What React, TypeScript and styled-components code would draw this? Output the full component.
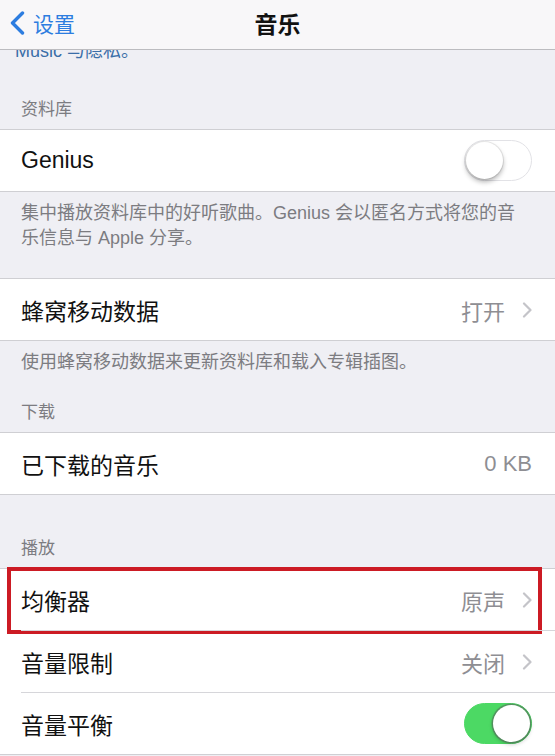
import * as React from "react";
import styled, { createGlobalStyle } from "styled-components";

const GlobalStyle = createGlobalStyle`
  html, body {
    margin: 0;
    padding: 0;
    background: #efeff4;
  }
  body {
    font-family: "Liberation Sans", "Noto Sans CJK SC", sans-serif;
    -webkit-font-smoothing: antialiased;
  }
`;

interface RowProps {
  label: string;
  value?: string;
  chevron?: boolean;
  toggle?: "on" | "off";
  highlighted?: boolean;
}

const Chevron = () => (
  <svg width="10" height="16" viewBox="0 0 10 16">
    <path
      d="M2 1.5 L8.5 8 L2 14.5"
      fill="none"
      stroke="#c4c4c9"
      strokeWidth="2.2"
      strokeLinecap="round"
      strokeLinejoin="round"
    />
  </svg>
);

const BackArrow = () => (
  <svg width="16" height="24" viewBox="0 0 16 24">
    <path
      d="M13.5 2 L3.5 12 L13.5 22"
      fill="none"
      stroke="#2d7de0"
      strokeWidth="3.4"
      strokeLinecap="round"
      strokeLinejoin="round"
    />
  </svg>
);

const Row = ({ label, value, chevron, toggle, highlighted }: RowProps) => (
  <StyledRow $highlighted={highlighted}>
    <Label>{label}</Label>
    <Accessory>
      {value && <Value>{value}</Value>}
      {chevron && <Chevron />}
      {toggle && (
        <Switch $on={toggle === "on"}>
          <Knob $on={toggle === "on"} />
        </Switch>
      )}
    </Accessory>
  </StyledRow>
);

export default function App() {
  return (
    <>
      <GlobalStyle />
      <Screen>
        <NavBar>
          <BackButton>
            <BackArrow />
            <span>设置</span>
          </BackButton>
          <Title>音乐</Title>
          <span />
        </NavBar>

        <ScrolledNote>
          <span>Music 与隐私。</span>
        </ScrolledNote>

        <Header $top={37}>资料库</Header>
        <Group>
          <Row label="Genius" toggle="off" />
        </Group>
        <Footer $bottom={27}>
          集中播放资料库中的好听歌曲。Genius 会以匿名方式将您的音
          <br />
          乐信息与 Apple 分享。
        </Footer>

        <Group>
          <Row label="蜂窝移动数据" value="打开" chevron />
        </Group>
        <Footer $bottom={0}>使用蜂窝移动数据来更新资料库和载入专辑插图。</Footer>

        <Header $top={27}>下载</Header>
        <Group>
          <Row label="已下载的音乐" value="0 KB" />
        </Group>

        <Header $top={43}>播放</Header>
        <Group>
          <Row label="均衡器" value="原声" chevron highlighted />
          <Row label="音量限制" value="关闭" chevron />
          <Row label="音量平衡" toggle="on" />
        </Group>
      </Screen>
    </>
  );
}

const Screen = styled.div`
  width: 555px;
  height: 756px;
  overflow: hidden;
  background: #efeff4;
  display: flex;
  flex-direction: column;
`;

const NavBar = styled.header`
  flex-shrink: 0;
  height: 50px;
  display: grid;
  grid-template-columns: 1fr auto 1fr;
  align-items: center;
  padding-bottom: 4px;
  box-sizing: border-box;
  background: #f8f7f9;
  border-bottom: 1px solid #bcbcc0;
  position: relative;
  z-index: 1;
`;

const BackButton = styled.div`
  display: flex;
  align-items: center;
  gap: 8px;
  padding-left: 9px;
  color: #2d7de0;
  font-size: 21px;
  svg {
    flex-shrink: 0;
  }
`;

const Title = styled.div`
  font-size: 23px;
  font-weight: 600;
  color: #111;
`;

const ScrolledNote = styled.div`
  flex-shrink: 0;
  height: 12px;
  overflow: hidden;
  display: flex;
  align-items: flex-end;
  padding-left: 15px;
  font-size: 18px;
  line-height: 22px;
  color: #3b6ea8;
`;

const Header = styled.div<{ $top: number }>`
  flex-shrink: 0;
  padding: ${(p) => p.$top}px 21px 8px;
  font-size: 17px;
  line-height: 22px;
  color: #7c7c81;
`;

const Footer = styled.div<{ $bottom: number }>`
  flex-shrink: 0;
  padding: 9px 21px ${(p) => p.$bottom}px;
  font-size: 18px;
  line-height: 25px;
  color: #7c7c81;
  white-space: nowrap;
`;

const Group = styled.div`
  flex-shrink: 0;
  background: #ffffff;
  border-top: 1px solid #cfcfd3;
  border-bottom: 1px solid #cfcfd3;
  display: flex;
  flex-direction: column;
`;

const StyledRow = styled.div<{ $highlighted?: boolean }>`
  position: relative;
  height: 61px;
  display: flex;
  align-items: center;
  justify-content: space-between;
  padding: 0 23px 0 21px;
  & + & {
    border-top: 1px solid #d6d6da;
    margin-left: 21px;
    padding-left: 0;
  }
  ${(p) =>
    p.$highlighted &&
    `
    &::after {
      content: "";
      position: absolute;
      left: 7px;
      right: 13px;
      top: -2px;
      bottom: -4px;
      border: 4px solid #cc1b24;
      box-sizing: border-box;
    }
  `}
`;

const Label = styled.span`
  font-size: 23px;
  color: #111;
`;

const Accessory = styled.div`
  display: flex;
  align-items: center;
  gap: 17px;
`;

const Value = styled.span`
  font-size: 22px;
  color: #8e8e93;
`;

const Switch = styled.div<{ $on: boolean }>`
  width: 68px;
  height: 41px;
  box-sizing: border-box;
  border-radius: 21px;
  display: flex;
  align-items: center;
  justify-content: ${(p) => (p.$on ? "flex-end" : "flex-start")};
  padding: 1px;
  background: ${(p) => (p.$on ? "#4cd964" : "#ffffff")};
  border: 1.5px solid ${(p) => (p.$on ? "#4cd964" : "#e2e2e6")};
`;

const Knob = styled.div<{ $on: boolean }>`
  width: 37px;
  height: 37px;
  border-radius: 50%;
  background: #ffffff;
  box-shadow: ${(p) =>
    p.$on
      ? "0 0 0 1.5px rgba(90, 100, 92, 0.55), 0 2px 4px rgba(0, 0, 0, 0.25)"
      : "0 0 0 1px rgba(0, 0, 0, 0.08), 0 3px 5px rgba(0, 0, 0, 0.3)"};
`;
